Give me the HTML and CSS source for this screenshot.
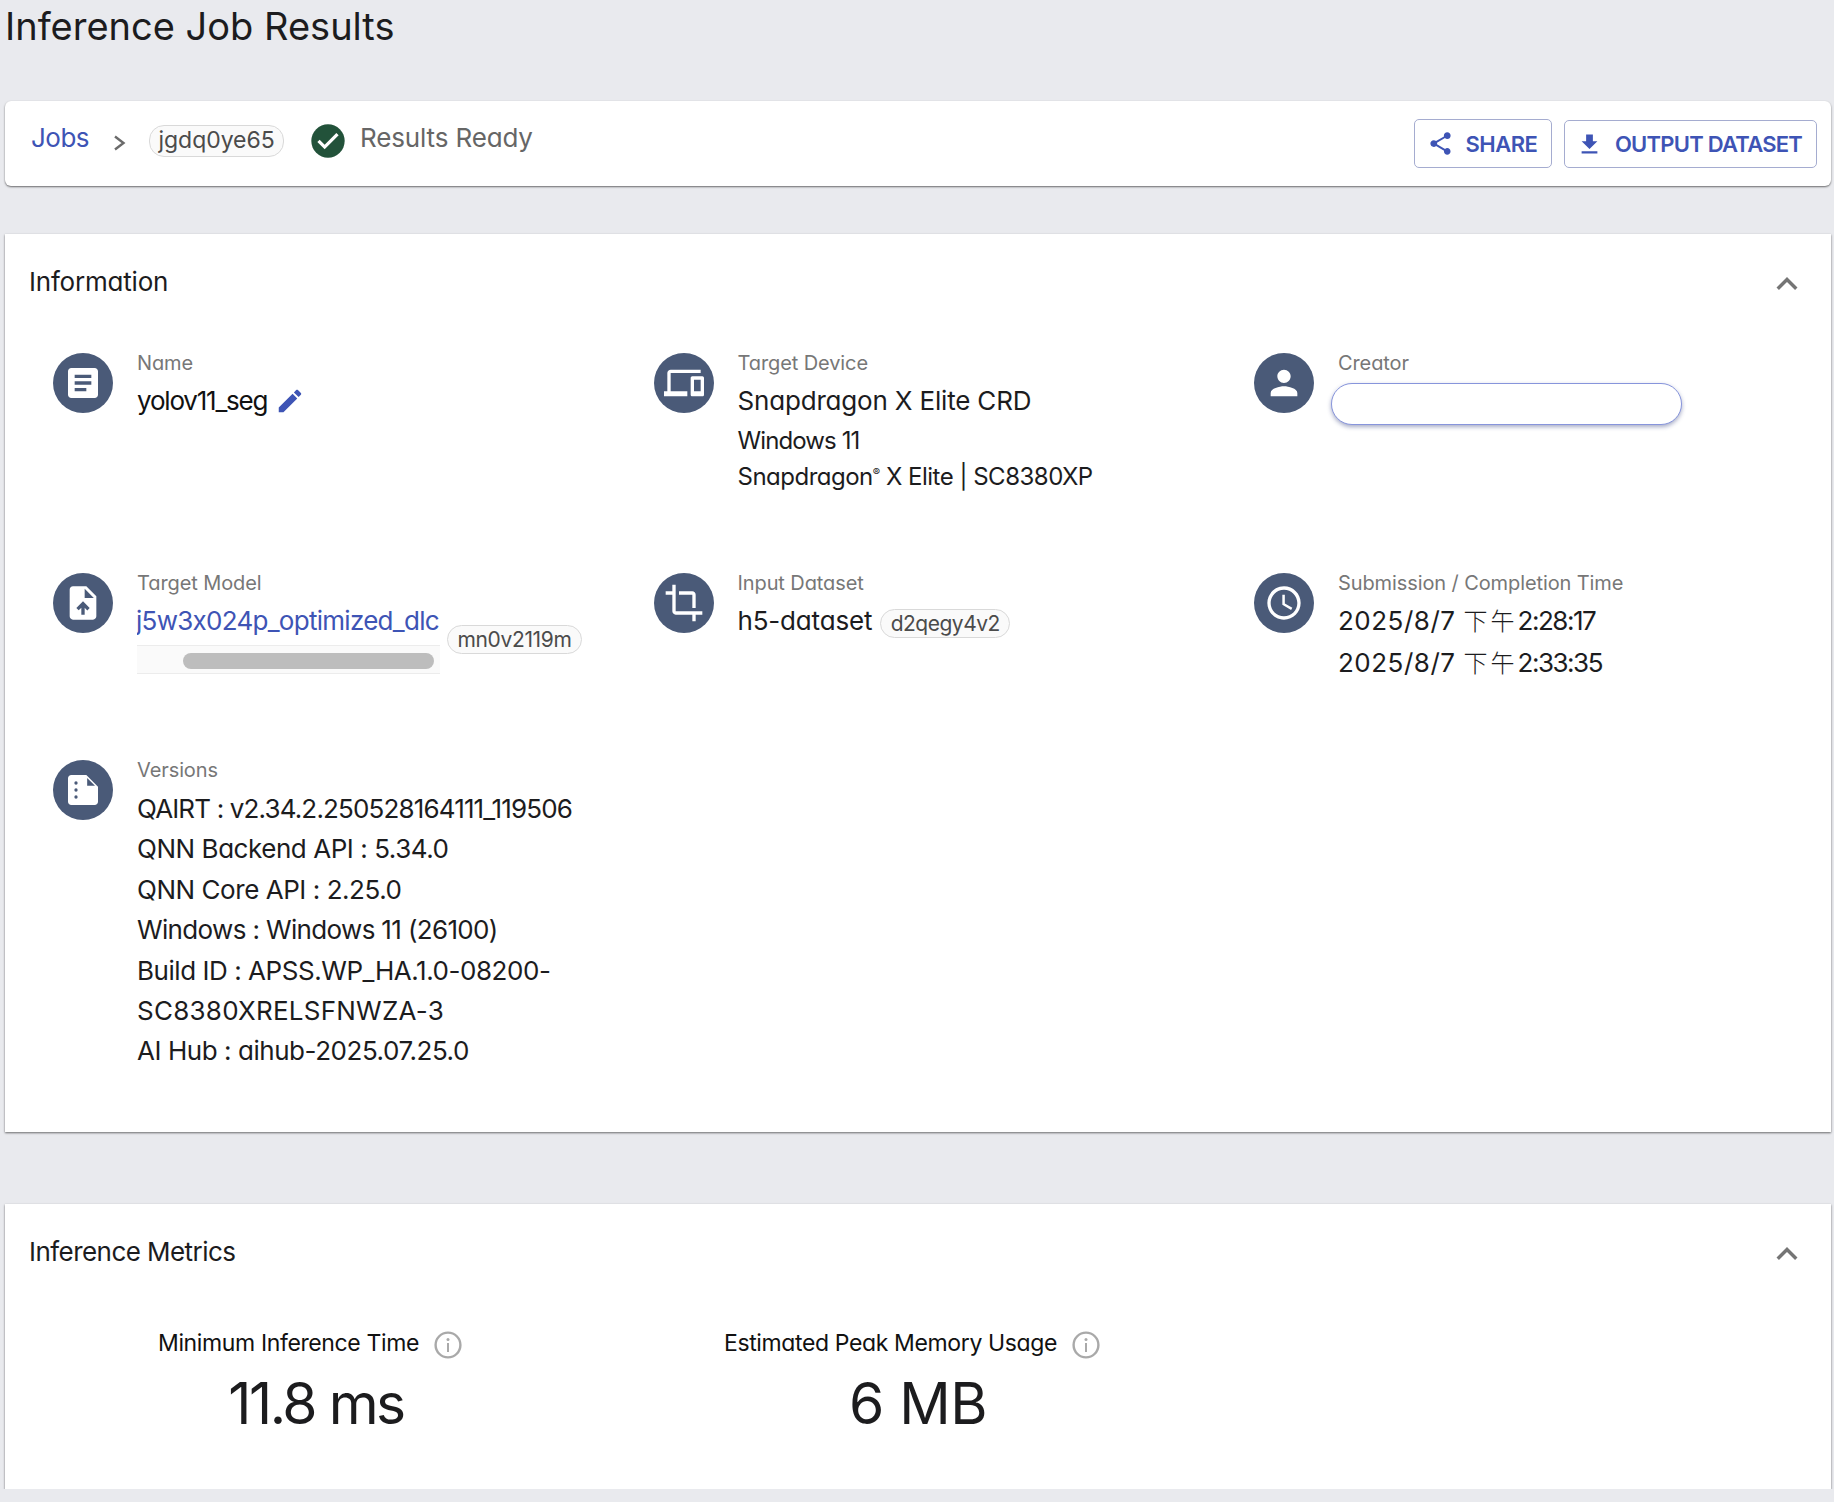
FILE: index.html
```html
<!DOCTYPE html>
<html lang="en">
<head>
    <meta charset="UTF-8">
    <meta name="viewport" content="width=device-width, initial-scale=1.0">
    <title>Inference Job Results</title>
    <link rel="stylesheet" href="styles.css">
</head>
<body>
    <h1 class="page-title">Inference Job Results</h1>

    <!-- Breadcrumb bar -->
    <div class="toolbar">
        <div class="crumbs">
            <a class="crumb-link">Jobs</a>
            <svg class="crumb-sep" viewBox="0 0 13 16"><path d="M2 1.5l8.5 6.5-8.5 6.5" fill="none" stroke="#6b6b6b" stroke-width="2.4"/></svg>
            <span class="chip chip-job">jgdq0ye65</span>
            <svg class="status-icon" viewBox="0 0 24 24"><circle cx="12" cy="12" r="10" fill="#22523a"/><path d="M10 14.2l-3-3-1.4 1.4 4.4 4.4 8.4-8.4L17 7.2z" fill="#fff"/></svg>
            <span class="status-text">Results Ready</span>
        </div>
        <div class="actions">
            <button class="btn btn-share">
                <svg viewBox="0 0 24 24"><path d="M18 16.08c-.76 0-1.44.3-1.96.77L8.91 12.7c.05-.23.09-.46.09-.7s-.04-.47-.09-.7l7.05-4.11c.54.5 1.25.81 2.04.81 1.66 0 3-1.34 3-3s-1.34-3-3-3-3 1.34-3 3c0 .24.04.47.09.7L8.04 9.81C7.5 9.31 6.79 9 6 9c-1.66 0-3 1.34-3 3s1.34 3 3 3c.79 0 1.5-.31 2.04-.81l7.12 4.16c-.05.21-.08.43-.08.65 0 1.61 1.31 2.92 2.92 2.92 1.61 0 2.92-1.31 2.92-2.92s-1.31-2.92-2.92-2.92z"/></svg>
                SHARE
            </button>
            <button class="btn btn-output">
                <svg viewBox="0 0 24 24"><path d="M19 9h-4V3H9v6H5l7 7 7-7zM5 18v2h14v-2H5z"/></svg>
                OUTPUT DATASET
            </button>
        </div>
    </div>

    <!-- Information section -->
    <section class="card card-info">
        <div class="card-head">
            <h2>Information</h2>
            <svg class="collapse" viewBox="0 0 24 24"><path d="M12 8l-6 6 1.41 1.41L12 10.83l4.59 4.58L18 14z"/></svg>
        </div>
        <div class="info-grid">
            <div class="info-item">
                <div class="round-icon"><svg viewBox="0 0 24 24"><path d="M19 3H5c-1.1 0-2 .9-2 2v14c0 1.1.9 2 2 2h14c1.1 0 2-.9 2-2V5c0-1.1-.9-2-2-2zm-5 14H7v-2h7v2zm3-4H7v-2h10v2zm0-4H7V7h10v2z"/></svg></div>
                <div class="info-body">
                    <div class="label">Name</div>
                    <div class="value name-row">yolov11_seg
                        <svg class="edit" viewBox="0 0 24 24"><path d="M3 17.25V21h3.75L17.81 9.94l-3.75-3.75L3 17.25zM20.71 7.04c.39-.39.39-1.02 0-1.41l-2.34-2.34c-.39-.39-1.02-.39-1.41 0l-1.83 1.83 3.75 3.75 1.83-1.83z"/></svg>
                    </div>
                </div>
            </div>
            <div class="info-item">
                <div class="round-icon"><svg viewBox="0 0 24 24"><path d="M4 6h18V4H4c-1.1 0-2 .9-2 2v11H0v3h14v-3H4V6zm19 2h-6c-.55 0-1 .45-1 1v10c0 .55.45 1 1 1h6c.55 0 1-.45 1-1V9c0-.55-.45-1-1-1zm-1 9h-4v-7h4v7z"/></svg></div>
                <div class="info-body">
                    <div class="label">Target Device</div>
                    <div class="value">Snapdragon X Elite CRD</div>
                    <div class="subvalue subvalue-os">Windows 11</div>
                    <div class="subvalue">Snapdragon<sup>®</sup> X Elite | SC8380XP</div>
                </div>
            </div>
            <div class="info-item">
                <div class="round-icon"><svg viewBox="0 0 24 24"><path d="M12 12c2.21 0 4-1.79 4-4s-1.79-4-4-4-4 1.79-4 4 1.79 4 4 4zm0 2c-2.67 0-8 1.34-8 4v2h16v-2c0-2.66-5.33-4-8-4z"/></svg></div>
                <div class="info-body">
                    <div class="label">Creator</div>
                    <div class="creator-input"></div>
                </div>
            </div>

            <div class="info-item">
                <div class="round-icon"><svg viewBox="0 0 24 24"><path fill-rule="evenodd" d="M14 2H6c-1.1 0-1.99.9-1.99 2L4 20c0 1.1.89 2 1.99 2H18c1.1 0 2-.9 2-2V8l-6-6zM13 9V3.5L18.5 9H13zM8 15.01l1.41 1.41L11 14.84V19h2v-4.16l1.59 1.59L16 15.01 12.01 11z"/></svg></div>
                <div class="info-body">
                    <div class="label">Target Model</div>
                    <div class="model-row">
                        <div class="model-scroll">
                            <a class="model-link">j5w3x024p_optimized_dlc</a>
                            <div class="scroll-track"><div class="scroll-thumb"></div></div>
                        </div>
                        <span class="chip chip-model">mn0v2119m</span>
                    </div>
                </div>
            </div>
            <div class="info-item">
                <div class="round-icon"><svg viewBox="0 0 24 24"><path d="M17 15h2V7c0-1.1-.9-2-2-2H9v2h8v8zM7 17V1H5v4H1v2h4v10c0 1.1.9 2 2 2h10v4h2v-4h4v-2H7z"/></svg></div>
                <div class="info-body">
                    <div class="label">Input Dataset</div>
                    <div class="value dataset-row">h5-dataset <span class="chip chip-dataset">d2qegy4v2</span></div>
                </div>
            </div>
            <div class="info-item">
                <div class="round-icon"><svg viewBox="0 0 24 24"><path d="M11.99 2C6.47 2 2 6.48 2 12s4.47 10 9.99 10C17.52 22 22 17.52 22 12S17.52 2 11.99 2zM12 20c-4.42 0-8-3.58-8-8s3.58-8 8-8 8 3.58 8 8-3.58 8-8 8zm.5-13H11v6l5.25 3.15.75-1.23-4.5-2.67z"/></svg></div>
                <div class="info-body">
                    <div class="label">Submission / Completion Time</div>
                    <div class="value"><span class="date">2025/8/7</span> <span class="ampm">下午</span><span class="clock">2:28:17</span></div>
                    <div class="value"><span class="date">2025/8/7</span> <span class="ampm">下午</span><span class="clock">2:33:35</span></div>
                </div>
            </div>

            <div class="info-item">
                <div class="round-icon"><svg viewBox="0 0 24 24"><path fill-rule="evenodd" d="M5 3h9l7 7v9c0 1.1-.9 2-2 2H5c-1.1 0-2-.9-2-2V5c0-1.1.9-2 2-2zM14.5 4.8V9.5h4.7z"/><circle cx="7.8" cy="7.8" r="1" fill="#4a5a78"/><circle cx="7.8" cy="12" r="1" fill="#4a5a78"/><circle cx="7.8" cy="16.2" r="1" fill="#4a5a78"/></svg></div>
                <div class="info-body versions">
                    <div class="label">Versions</div>
                    <div class="value tight-lg">QAIRT : v2.34.2.250528164111_119506</div>
                    <div class="value">QNN Backend API : 5.34.0</div>
                    <div class="value">QNN Core API : 2.25.0</div>
                    <div class="value tight-md">Windows : Windows 11 (26100)</div>
                    <div class="value">Build ID : APSS.WP_HA.1.0-08200-<br><span class="wide">SC8380XRELSFNWZA-3</span></div>
                    <div class="value">AI Hub : aihub-2025.07.25.0</div>
                </div>
            </div>
        </div>
    </section>

    <!-- Metrics section -->
    <section class="card card-metrics">
        <div class="card-head">
            <h2>Inference Metrics</h2>
            <svg class="collapse" viewBox="0 0 24 24"><path d="M12 8l-6 6 1.41 1.41L12 10.83l4.59 4.58L18 14z"/></svg>
        </div>
        <div class="metrics">
            <div class="metric">
                <div class="metric-label">Minimum Inference Time
                    <svg class="info-icon" viewBox="0 0 28 28"><circle cx="14" cy="14" r="12.4" fill="none" stroke="#a9a9a9" stroke-width="2.4"/><circle cx="14" cy="8.6" r="1.5" fill="#a9a9a9"/><rect x="13" y="12" width="2" height="9" fill="#a9a9a9"/></svg>
                </div>
                <div class="metric-value metric-time">11.8 ms</div>
            </div>
            <div class="metric">
                <div class="metric-label">Estimated Peak Memory Usage
                    <svg class="info-icon" viewBox="0 0 28 28"><circle cx="14" cy="14" r="12.4" fill="none" stroke="#a9a9a9" stroke-width="2.4"/><circle cx="14" cy="8.6" r="1.5" fill="#a9a9a9"/><rect x="13" y="12" width="2" height="9" fill="#a9a9a9"/></svg>
                </div>
                <div class="metric-value">6 MB</div>
            </div>
        </div>
    </section>
</body>
</html>
```

FILE: styles.css
```css
body {
    margin: 0;
    padding: 0 3px 0 5px;
    background: #e9eaee;
    color: #1c1c1e;
    font-family: "Inter", "Noto Sans CJK TC", sans-serif;
    font-feature-settings: "cv11";
    overflow: hidden;
}

.page-title {
    margin: 0 0 49px;
    font-size: 38px;
    line-height: 52px;
    font-weight: 400;
}

/* Breadcrumb bar */
.toolbar {
    display: flex;
    justify-content: space-between;
    height: 85px;
    box-sizing: border-box;
    padding: 18px 14px 0 26px;
    margin-bottom: 48px;
    background: #fff;
    border-radius: 6px;
    box-shadow: 0 1px 2px rgba(0, 0, 0, 0.55);
}

.crumbs {
    display: flex;
    align-items: flex-start;
    height: 38px;
}

.crumb-link {
    color: #3e54b5;
    font-size: 26px;
    line-height: 38px;
    letter-spacing: -0.5px;
}

.crumb-sep {
    width: 13px;
    height: 16px;
    margin: 16px 0 0 24px;
}

.chip {
    display: inline-block;
    box-sizing: border-box;
    border: 1px solid #d9d9d9;
    border-radius: 15px;
    background: #fafafa;
    color: #4b4b4b;
    font-size: 21px;
    text-align: center;
}

.chip-job {
    width: 135px;
    height: 32px;
    line-height: 29px;
    margin: 6px 0 0 23px;
    font-size: 23px;
    letter-spacing: -0.05px;
}

.status-icon {
    width: 40px;
    height: 40px;
    margin: 2px 0 0 24px;
}

.status-text {
    margin-left: 12px;
    color: #666;
    font-size: 26px;
    line-height: 38px;
    letter-spacing: -0.15px;
}

.actions {
    display: flex;
    gap: 12px;
}

.btn {
    display: flex;
    align-items: center;
    justify-content: center;
    height: 49px;
    padding: 0;
    background: #fff;
    border: 1px solid #a5acd0;
    border-radius: 5px;
    color: #3e54b5;
    font-family: inherit;
    font-feature-settings: inherit;
    font-size: 22px;
    font-weight: 600;
    letter-spacing: -0.5px;
}

.btn svg {
    fill: #3e54b5;
    width: 27px;
    height: 27px;
}

.btn-share {
    width: 138px;
    gap: 12px;
    padding-right: 2px;
}

.btn-output {
    width: 253px;
    gap: 12px;
    height: 48px;
    margin-top: 1px;
    padding-right: 3px;
    letter-spacing: -0.75px;
}

/* Cards */
.card {
    background: #fff;
    box-shadow: 0 1px 2px rgba(0, 0, 0, 0.55);
}

.card-info {
    height: 898px;
    margin-bottom: 72px;
}

.card-metrics {
    height: 285px;
}

.card-head {
    display: flex;
    justify-content: space-between;
    align-items: center;
    height: 94px;
    padding: 0 23px 0 24px;
}

.card-head h2 {
    margin: 0;
    font-size: 26px;
    font-weight: 400;
    letter-spacing: -0.2px;
}

.card-metrics .card-head h2 {
    letter-spacing: -0.55px;
}

.collapse {
    width: 42px;
    height: 42px;
    fill: #757575;
    margin-top: 6px;
}

/* Information grid */
.info-grid {
    display: grid;
    grid-template-columns: repeat(3, 600.5px);
    grid-template-rows: 220px 187px auto;
    padding: 25px 0 0 48px;
}

.info-item {
    display: flex;
    gap: 24px;
}

.round-icon {
    display: flex;
    align-items: center;
    justify-content: center;
    flex: none;
    width: 60px;
    height: 60px;
    border-radius: 50%;
    background: #4a5a78;
}

.round-icon svg {
    width: 40px;
    height: 40px;
    fill: #fff;
}

.label {
    height: 20px;
    margin-bottom: 8px;
    color: #777;
    font-size: 20px;
    line-height: 20px;
    letter-spacing: -0.1px;
}

.value {
    font-size: 26px;
    line-height: 40.5px;
    letter-spacing: -0.18px;
}

.date {
    letter-spacing: 0.5px;
}

.ampm {
    margin-left: 1px;
    font-size: 24px;
    font-weight: 300;
    letter-spacing: 3px;
}

.clock {
    letter-spacing: -1.5px;
}

.subvalue {
    margin-top: 2px;
    font-size: 24px;
    line-height: 34px;
    letter-spacing: -0.5px;
}

.subvalue-os {
    letter-spacing: -0.9px;
}

.subvalue sup {
    font-size: 11px;
    line-height: 0;
}

.versions .label {
    margin-bottom: 9px;
}

.versions .value {
    line-height: 40.4px;
    letter-spacing: -0.45px;
}

.versions .tight-lg {
    letter-spacing: -0.85px;
}

.versions .tight-md {
    letter-spacing: -0.65px;
}

.wide {
    letter-spacing: 0.25px;
}

.name-row {
    display: flex;
    align-items: center;
    gap: 8px;
    color: #111;
    letter-spacing: -1.2px;
}

.edit {
    width: 30px;
    height: 30px;
    fill: #3e54b5;
}

.creator-input {
    width: 351px;
    height: 42px;
    margin: 10px 0 0 -7px;
    box-sizing: border-box;
    background: #fff;
    border: 1px solid #8795dc;
    border-radius: 21px;
    box-shadow: 0 2px 4px rgba(60, 70, 130, 0.45);
}

.model-row {
    display: flex;
    align-items: center;
    gap: 7px;
}

.model-scroll {
    width: 303px;
    overflow: hidden;
}

.model-link {
    display: block;
    height: 44px;
    margin-left: -1px;
    color: #3e54b5;
    font-size: 26px;
    line-height: 40px;
    letter-spacing: -0.72px;
    white-space: nowrap;
}

.scroll-track {
    height: 29px;
    box-sizing: border-box;
    padding: 7px 6px 0 46px;
    background: #fafafa;
    border-top: 1px solid #ececec;
    border-bottom: 1px solid #ececec;
}

.scroll-thumb {
    height: 16px;
    border-radius: 8px;
    background: #bdbdbd;
}

.chip-model {
    width: 135px;
    height: 29px;
    line-height: 27px;
    margin-top: 4px;
    letter-spacing: -0.33px;
}

.dataset-row {
    display: flex;
    align-items: center;
    gap: 8px;
}

.chip-dataset {
    width: 130px;
    height: 29px;
    line-height: 27px;
    margin-top: 4px;
    letter-spacing: -0.5px;
}

/* Metrics */
.metrics {
    display: flex;
    padding: 28px 0 0 10px;
}

.metric {
    width: 602px;
    text-align: center;
}

.metric-label {
    display: flex;
    align-items: center;
    justify-content: center;
    gap: 15px;
    height: 34px;
    padding-right: 12px;
    color: #111;
    font-size: 23px;
    letter-spacing: -0.37px;
}

.info-icon {
    width: 28px;
    height: 28px;
    margin-top: 4px;
}

.metric-value {
    margin-top: 12px;
    font-size: 57px;
    line-height: 64px;
    letter-spacing: -0.5px;
}

.metric-time {
    letter-spacing: -2.5px;
}
```
